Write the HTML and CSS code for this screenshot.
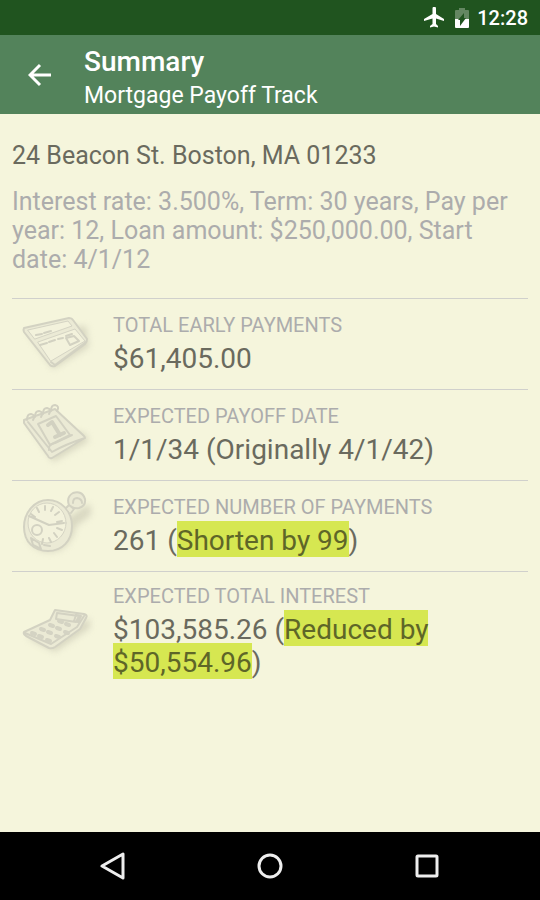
FILE: index.html
```html
<!DOCTYPE html>
<html lang="en">
<head>
    <meta charset="UTF-8">
    <meta name="viewport" content="width=device-width, initial-scale=1.0">
    <title>Mortgage Payoff Track</title>
    <link rel="stylesheet" href="styles.css">
</head>
<body>
    <div class="status-bar">
        <svg class="plane" viewBox="0 0 20 21" aria-hidden="true">
            <path d="M20 14v-2l-8-5V1.500a1.500 1.500 0 0 0-3.500 0V7L0 12v2l8.500-2.500V17L6 19v1.500l4-1 4 1V19l-2-2v-5.500z"/>
        </svg>
        <svg class="battery" viewBox="0 0 14 20" aria-hidden="true">
            <path class="battery-empty" d="M1 2h3V0h6v2h3q1 0 1 1v8H0V3q0-1 1-1z"/>
            <path d="M0 11h14v8q0 1-1 1H1q-1 0-1-1z"/>
            <path class="battery-bolt" d="M9 5v5h2l-6 8v-6H3z"/>
        </svg>
        <span class="clock">12:28</span>
    </div>

    <header class="app-bar">
        <button class="back-btn" type="button" aria-label="Back">
            <svg viewBox="0 0 24 24" aria-hidden="true">
                <path d="M12 2 2 12l10 10M2 12h21"/>
            </svg>
        </button>
        <div>
            <h1>Summary</h1>
            <p class="subtitle">Mortgage Payoff Track</p>
        </div>
    </header>

    <main class="container">
        <h2>24 Beacon St. Boston, MA 01233</h2>
        <p class="details">Interest rate: 3.500%, Term: 30 years, Pay per year: 12, Loan amount: $250,000.00, Start date: 4/1/12</p>

        <div class="row">
            <!-- Check -->
            <svg class="icon" viewBox="0 0 66 60" aria-hidden="true">
                <path class="shadow" d="M4 20 30 57 66 35 63 14z"/>
                <path class="face" d="M1 16 46 6q3 0 4 2l14 19q0 3-2 5L32 54q-3 1-5-1L1 20q-1-2 0-4z"/>
                <path class="line" d="M1 16 46 6q3 0 4 2l14 19q0 3-2 5L32 54q-3 1-5-1L1 20q-1-2 0-4z"/>
                <path class="paper" d="M5 18 45 9l4 5-37 13zM15 30l37-13 10 12-34 20z"/>
                <path class="line" d="M43 26l8-2 5 5-9 4zM28 50l4 3 31-23"/>
                <path class="bold" d="m13 23 6-1m2-1 7-2M17 33l7-2m2-1 6-2m3-1 5-1m3-2 6-2"/>
            </svg>
            <div>
                <div class="label">TOTAL EARLY PAYMENTS</div>
                <div class="value">$61,405.00</div>
            </div>
        </div>

        <div class="row">
            <!-- Calendar -->
            <svg class="icon" viewBox="0 0 66 60" aria-hidden="true">
                <path class="shadow" d="m5 20 25 39 36-21-5-8z"/>
                <path class="face" d="M1 17 32 6l29 27q2 2-1 3L29 55q-3 1-4-2L1 20z"/>
                <path class="line" d="M1 17 32 6l29 27q2 2-1 3L29 55q-3 1-4-2L1 20zM5 19l24 30q14-8 33-14M26 47q-1-6 6-7l17-8"/>
                <path class="line" d="m15 21 18-8 14 19-20 10z"/>
                <path class="digit" d="m25 22 4-3 8 13m-5 2 9-4"/>
                <path class="bold" d="M4 17q0-6 4-6 5 1 2 6M12 14q0-6 4-6 5 1 2 6M20 11q0-6 4-6 5 1 2 6M28 8q0-6 4-6 5 1 2 6"/>
            </svg>
            <div>
                <div class="label">EXPECTED PAYOFF DATE</div>
                <div class="value">1/1/34 (Originally 4/1/42)</div>
            </div>
        </div>

        <div class="row">
            <!-- Pocket watch -->
            <svg class="icon" viewBox="0 0 66 60" aria-hidden="true">
                <path class="shadow" d="M3 43q12 20 34 13 13-8 16-24l14-10q3-8-2-12L10 47z"/>
                <ellipse class="face" cx="25" cy="32" rx="24" ry="25"/>
                <ellipse class="paper" cx="24" cy="29" rx="19" ry="20"/>
                <path class="line" d="M49 32c0 15-10 25-24 25S1 48 1 33 12 6 25 6s24 11 24 26z"/>
                <path class="face line" d="M43 14l3-3 5 4-3 4M46 11q-3-8 4-12 9-3 12 6 1 7-6 9-4 1-7-1z"/>
                <path class="line" d="M50 9q0-5 4-5 5 1 5 5"/>
                <circle class="line" cx="14" cy="36" r="5"/>
                <path class="bold" d="M22 12v4m8-3-2 4m8 1-4 3m7 6-5 1m5 8-5-2m0 9-3-4m-3 9-2-4m-7 6 1-5M8 20l4 3m2-9 2 4M6 22l20 9 15-2"/>
                <path class="bold" d="m8 44 8 5 2 6-8-4zm13 7 6 1"/>
            </svg>
            <div>
                <div class="label">EXPECTED NUMBER OF PAYMENTS</div>
                <div class="value">261 (<mark>Shorten by 99</mark>)</div>
            </div>
        </div>

        <div class="row">
            <!-- Calculator -->
            <svg class="icon" viewBox="0 0 66 60" aria-hidden="true">
                <path class="shadow" d="m4 38 28 14 35-24v-9z"/>
                <path class="face" d="m1 32 26-12 5-10 29 4q4 1 2 4l-6 11-25 18q-3 2-6 1L3 36q-3-2-2-4z"/>
                <path class="line" d="m1 32 26-12 5-10 29 4q4 1 2 4l-6 11-25 18q-3 2-6 1L3 36q-3-2-2-4zM2 33l26 11 26-17 7-11M34 13l22 3-3 6-20-3zM53 15l5 1-3 6-4-1z"/>
                <path class="keys" d="m9 33 3 1m6-5 3 1m6-5 3 1m6-5 3 1M16 36l3 1m6-5 3 1m6-5 3 1m6-5 3 1M24 40l3 1m6-5 3 1m6-5 3 1"/>
            </svg>
            <div>
                <div class="label">EXPECTED TOTAL INTEREST</div>
                <div class="value">$103,585.26 (<mark>Reduced by $50,554.96</mark>)</div>
            </div>
        </div>
    </main>

    <nav class="nav-bar">
        <button type="button" aria-label="Back">
            <svg viewBox="0 0 28 28" aria-hidden="true"><path d="M24 2v24L3 14z"/></svg>
        </button>
        <button type="button" aria-label="Home">
            <svg viewBox="0 0 28 28" aria-hidden="true"><circle cx="14" cy="14" r="11"/></svg>
        </button>
        <button type="button" aria-label="Recent apps">
            <svg viewBox="0 0 28 28" aria-hidden="true"><rect x="4" y="4" width="20" height="20" rx="1"/></svg>
        </button>
    </nav>
</body>
</html>
```
FILE: styles.css
```css
* {
    box-sizing: border-box;
}
body {
    margin: 0;
    min-height: 100vh;
    display: flex;
    flex-direction: column;
    font-family: Roboto, "Liberation Sans", sans-serif;
    background-color: #f5f5dc;
    color: #6a6a5e;
}
h1, h2, p {
    margin: 0;
}
button {
    padding: 0;
    border: none;
    background: none;
    cursor: pointer;
}
svg {
    display: block;
}
.status-bar {
    display: flex;
    align-items: center;
    justify-content: flex-end;
    height: 35px;
    padding: 0 12px;
    background-color: #20541f;
    color: #fff;
    fill: #fff;
}
.plane {
    width: 20px;
    height: 21px;
}
.battery {
    width: 14px;
    height: 20px;
    margin: 0 8px 0 11px;
}
.battery-empty {
    fill: #648762;
}
.battery-bolt {
    fill: #20541f;
}
.clock {
    font-size: 20px;
    font-weight: 500;
}
.app-bar {
    display: flex;
    align-items: center;
    gap: 32px;
    height: 79px;
    padding: 6px 28px 0;
    background-color: #53835b;
    color: #fff;
}
.back-btn {
    padding-bottom: 6px;
}
.back-btn svg {
    width: 24px;
    height: 24px;
    fill: none;
    stroke: #fff;
    stroke-width: 3;
}
h1 {
    font-size: 28px;
    line-height: 36px;
    font-weight: 500;
}
.subtitle {
    font-size: 23px;
    line-height: 32px;
}
.container {
    flex: 1;
    padding: 27px 12px;
}
h2 {
    font-size: 25px;
    line-height: 29px;
    font-weight: 400;
}
.details {
    margin: 17px 0 24px;
    font-size: 25px;
    line-height: 29px;
    color: #acacac;
}
.row {
    display: flex;
    align-items: center;
    gap: 24px;
    padding: 14px 0 14px 11px;
    border-top: 1px solid #d0d0cc;
}
.row:last-child {
    padding-top: 12px;
}
.icon {
    flex: none;
    width: 66px;
    height: 60px;
    margin: -2px 0 2px;
    overflow: visible;
    fill: none;
    stroke-linejoin: round;
    stroke-linecap: round;
}
.shadow {
    fill: #d9d8c2;
    filter: blur(3px);
}
.face {
    fill: #ebead5;
}
.paper {
    fill: #f3f2dc;
    stroke: #d5d4c4;
    stroke-width: 1;
}
.line {
    stroke: #d3d2c2;
    stroke-width: 2;
}
.bold {
    stroke: #d2d1c1;
    stroke-width: 2;
}
.digit {
    stroke: #d2d1c1;
    stroke-width: 4;
}
.keys {
    stroke: #d4d3c3;
    stroke-width: 4;
}
.label {
    font-size: 20px;
    line-height: 24px;
    color: #acacac;
}
.value {
    margin-top: 5px;
    font-size: 28px;
    line-height: 33px;
}
mark {
    padding-top: 3px;
    background-color: #d6e751;
    color: #5e6628;
}
.nav-bar {
    display: flex;
    align-items: center;
    justify-content: center;
    gap: 129px;
    height: 68px;
    background-color: #000;
}
.nav-bar svg {
    width: 28px;
    height: 28px;
    fill: none;
    stroke: #eee;
    stroke-width: 3;
    stroke-linejoin: round;
}
```
